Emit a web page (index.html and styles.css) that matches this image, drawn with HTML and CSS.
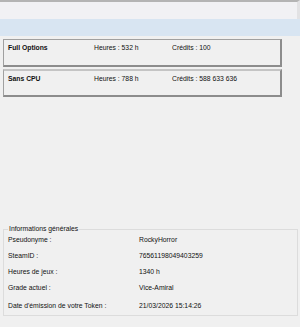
FILE: index.html
```html
<!DOCTYPE html>
<html lang="fr">
<head>
    <meta charset="UTF-8">
    <meta name="viewport" content="width=device-width, initial-scale=1.0">
    <title>Profil</title>
    <link rel="stylesheet" href="styles.css">
</head>
<body>
    <div class="window">
        <div class="toolbar"></div>
        <div class="tabbar"></div>

        <div class="vehicles">
            <div class="vehicle">
                <span class="vehicle-name">Full Options</span>
                <span>Heures : 532 h</span>
                <span>Crédits : 100</span>
            </div>
            <div class="vehicle">
                <span class="vehicle-name">Sans CPU</span>
                <span>Heures : 788 h</span>
                <span>Crédits : 588 633 636</span>
            </div>
        </div>

        <fieldset class="info">
            <legend>Informations générales</legend>
            <div class="info-grid">
                <span>Pseudonyme :</span><span>RockyHorror</span>
                <span>SteamID :</span><span>76561198049403259</span>
                <span>Heures de jeux :</span><span>1340 h</span>
                <span>Grade actuel :</span><span>Vice-Amiral</span>
                <span>Date d'émission de votre Token :</span><span>21/03/2026 15:14:26</span>
            </div>
        </fieldset>
    </div>
</body>
</html>
```

FILE: styles.css
```css
body {
    margin: 0;
    padding: 0;
    background-color: #f0f0f0;
    font-family: "Liberation Sans", Arial, sans-serif;
    font-size: 6.8px;
    color: #111;
}
.window {
    width: 300px;
    height: 327px;
    overflow: hidden;
}
.toolbar {
    height: 17px;
    border-top: 2px solid #b4b4b4;
    background: #f1f1f4;
    border-right: 3px solid #e2e2e4;
}
.tabbar {
    height: 17px;
    background: #d8e5f2;
}
.vehicles {
    display: flex;
    flex-direction: column;
    gap: 2px;
    padding: 3px 0 0 3px;
    width: 279px;
}
.vehicle {
    display: grid;
    grid-template-columns: 86px 78px 1fr;
    height: 21px;
    padding: 4px 4px 0 4px;
    border: 1px solid #a0a0a0;
    border-right-width: 2px;
    border-bottom-width: 2px;
    border-right-color: #8c8c8c;
    border-bottom-color: #8c8c8c;
    line-height: 8px;
}
.vehicle + .vehicle {
    border-top: 2px solid #c4c4c4;
    height: 20px;
}
.vehicle-name {
    font-weight: bold;
}
.info {
    margin: 128px 2px 0 3px;
    padding: 0 4px 2px 4px;
    border: 1px solid #dcdcdc;
    height: 91px;
    box-sizing: border-box;
}
.info legend {
    padding: 0 1px;
    margin-left: 0;
    line-height: 8px;
}
.info-grid {
    display: grid;
    grid-template-columns: 131px 1fr;
    grid-template-rows: 16px 16px 16px 17px 18px;
    align-items: center;
    margin-top: -2px;
}
```
